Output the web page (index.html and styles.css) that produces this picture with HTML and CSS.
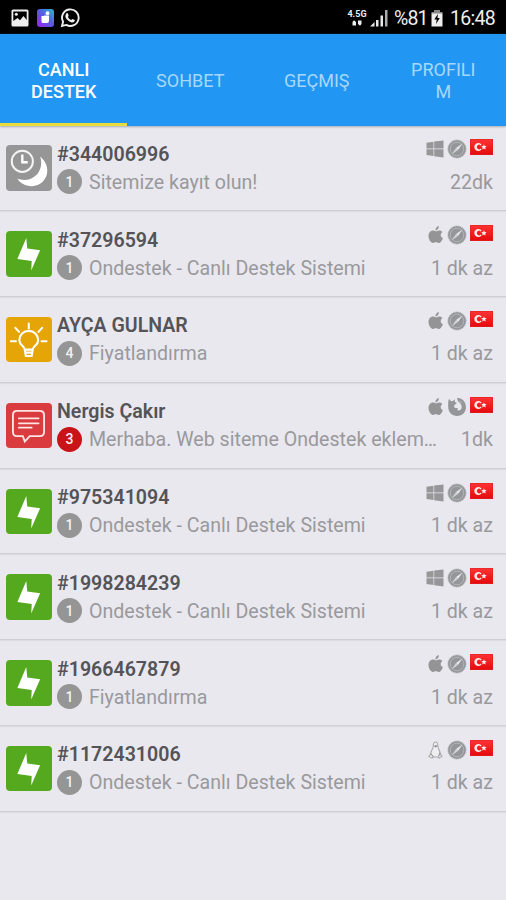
FILE: index.html
```html
<!DOCTYPE html>
<html lang="tr">
<head>
<meta charset="utf-8">
<title>Canlı Destek</title>
<link rel="stylesheet" href="styles.css">
</head>
<body>
<svg class="defs" aria-hidden="true">
  <defs>
    <linearGradient id="app" x1="0" y1="1" x2="1" y2="0"><stop offset="0" stop-color="#9d20f2"/><stop offset=".55" stop-color="#5360e0"/><stop offset="1" stop-color="#28b8d4"/></linearGradient>
    <linearGradient id="red" x1="0" y1="0" x2="0" y2="1"><stop offset="0" stop-color="#ff3434"/><stop offset="1" stop-color="#e3090d"/></linearGradient>
  </defs>
  <symbol id="bolt" viewBox="0 0 46 46"><path fill="#fff" d="M20.5 7 11.5 28.2 26 30.3 25.5 40 34.5 19.5 21.5 17.7Z"/></symbol>
  <symbol id="away" viewBox="0 0 46 46"><path fill="#fff" d="M34.500 11.500C45 20 44 35 32 40.500C24 43.500 15 40 11.500 34.200C18 36.500 26 35.500 31.500 29.500C36 24 36.500 17.500 34.500 11.500Z"/><circle cx="16.500" cy="16.500" r="10.700" fill="none" stroke="#f5f5f5" stroke-width="2"/><path d="M16.500 9.500V17.500H22" fill="none" stroke="#fff" stroke-width="2.400"/></symbol>
  <symbol id="idea" viewBox="0 0 46 46"><path d="M19 33C19 29 13.500 29 13.500 23.500a9.500 9.500 0 0 1 19 0C32.500 29 27 29 27 33ZM19 33l1 6.500h6l1-6.500M20 36h6M23 6.500v5M9.500 11l3.700 4M36.500 11l-3.700 4M5 24.500h5M36 24.500h5" fill="none" stroke="#fff" stroke-width="2.100" stroke-linecap="round"/></symbol>
  <symbol id="chat" viewBox="0 0 46 46"><path d="M11 8H34Q38.500 8 38.500 12.500V29Q38.500 33.500 34 33.500H24L19 39 17 33.500H11Q7 33.500 7 29V12.500Q7 8 11 8Z" fill="none" stroke="#ffe4e4" stroke-width="1.900"/><path d="M13 15.500H33M13 20.500H33M13 25H26" stroke="#ffe4e4" stroke-width="1.800" stroke-linecap="round"/></symbol>
  <symbol id="windows" viewBox="0 0 18 18"><path fill="#979799" d="M.5 2.700 7.500 1.700V8.500H.5ZM8.200 1.600 17.500 .4V8.500H8.200ZM.5 9.200H7.500V16L.5 15ZM8.200 9.200H17.500V17.500L8.200 16.200Z"/></symbol>
  <symbol id="apple" viewBox="0 0 18 18"><path fill="#949496" d="M12.800 .1C13 2.500 11.400 4.500 9.500 4.400 9.300 2.300 11 .4 12.800 .1ZM16.900 12.200C16 14.600 14.500 17 12.600 17 11.400 17 11.200 16.300 9.900 16.300 8.500 16.300 8.100 17 7 17 4.700 17 2.500 13 2.500 10 2.500 6.600 4.800 4.500 7 4.500 8.300 4.500 9.100 5.300 10 5.300 10.900 5.300 11.800 4.400 13.300 4.500 14.600 4.500 15.800 5.100 16.500 6.100 13.900 8 14.200 11 16.900 12.200Z"/></symbol>
  <symbol id="linux" viewBox="0 0 18 18"><path d="M7.200 6C7.200 3 7.600 1 9.500 1S12 3 12 6C12.300 8 14.300 9.800 14.300 13L16 15.200 13.200 17 11.500 16H7.500L6 17.200 2.800 15.400 4.800 13C4.500 10 6.800 8.500 7.200 6Z" fill="#eeeef0" stroke="#aaaaad" stroke-width="1.100"/><path d="M8 5.200 9.600 6.600 11.500 5.200 10.500 4.200 9 4.200ZM12 7.500C13.500 10 13.500 11.500 12.800 14L14 12.500" fill="#8b8b8d"/><path d="m4.500 12.500 3 3.300M14.500 12.500 12 15.500" stroke="#929294" stroke-width="1.100"/></symbol>
  <symbol id="safari" viewBox="0 0 20 20"><circle cx="10" cy="10" r="9" fill="#949699"/><circle cx="10" cy="10" r="9.100" fill="none" stroke="#a9abad" stroke-width="1" stroke-dasharray="1 1"/><circle cx="10" cy="10" r="6.800" fill="none" stroke="#b7b9bb" stroke-width=".9"/><path fill="#e8e8eb" d="M15.500 4.600 11 11 9 9Z"/><path fill="#d2d3d5" d="M4.500 15.400 9 9 11 11Z"/></symbol>
  <symbol id="firefox" viewBox="0 0 20 20"><path fill="#949699" d="M2 2 4.200 4.300 6 3.900 7.600 2.200 8 5 9.900 5.900 7.500 8 7 10C8 11.500 9.500 10.800 11 11.300 9.500 13 11 14 12.800 13.200 16 11.500 15 6.500 11 4.500L10 1.100C16 .5 19.300 6 19 11 18.500 16 14.500 19 10 19 5 19 1.200 15 1.200 10 1.200 6.500 1 4 2 2Z"/><path fill="#aeb0b2" d="M11 4.500C12 3 15 4 16 7L14 5.500Z"/></symbol>
  <symbol id="flag" viewBox="0 0 23 16"><path fill="url(#red)" d="M0 0H23V16H0Z"/><path d="M.5.500H22.500V15.500H.500Z" fill="none" stroke="#dd2426" stroke-opacity=".65"/><path fill="#ffecec" d="M11.600 5.700A4 4 0 1 0 11.600 10.300L10.800 9.600A2.300 2.300 0 1 1 10.800 6.400ZM13.900 5.300 14.700 7 16.700 7.300 15.200 8.600 15.700 10.600 13.900 9.500 12.200 10.600 12.600 8.600 11.200 7.300 13.200 7Z"/></symbol>
</svg>

<header class="status">
  <svg class="picture" viewBox="0 0 18 18"><path fill="#eee" fill-rule="evenodd" d="M2 .5H16Q17.500.5 17.500 2V16Q17.500 17.500 16 17.500H2Q.5 17.500.5 16V2Q.5.5 2 .5ZM2.300 2.500V12L6.500 9 9 11.200 12.500 7 15.700 11V2.500Z"/><circle cx="5.300" cy="5.300" r="1.500" fill="#eee"/></svg>
  <svg class="app" viewBox="0 0 18 18"><rect width="17" height="18" rx="3" fill="url(#app)"/><path fill="#fff" d="M4.500 7H9V14H6Q4.500 14 4.500 12.500ZM7 6.500H12V12Q12 14 10 14H7Z"/><circle cx="10.500" cy="4.200" r="1.900" fill="#fff"/></svg>
  <svg class="whatsapp" viewBox="0 0 20 20"><path d="M2 18 3.100 13.700A8.300 8.300 0 1 1 6.300 16.900Z" fill="none" stroke="#eee" stroke-width="1.900"/><path d="M6 5.800C6.800 4.800 7.600 4.800 8 5.800L8.700 7.700 7.900 9C8.700 10.500 9.800 11.500 11.200 12.100L12.400 10.900 14.800 12C15 13.800 13.200 14.800 11.800 14.400 8.500 13.700 5.800 10.800 5.300 8.200Z" fill="#eee"/></svg>
  <span class="network"><span>4.5G</span><svg viewBox="0 0 12 6"><path fill="#eee" d="M1.500 2 3 .3 5 2V5.500H1.500ZM7 .5H10.500V4L9 5.700 7 4Z"/></svg></span>
  <svg class="signal" viewBox="0 0 18 18"><path fill="#e8e8e8" d="M0 17.500 4.500 13V17.500ZM6 11H8.500V17.500H6ZM10.500 6.500H13V17.500H10.500Z"/><path fill="#aaa" d="M15 1H17.500V17.500H15Z"/></svg>
  <span class="percent">%81</span>
  <svg class="battery" viewBox="0 0 12 18"><path fill="#888" d="M3 1H9V3H11.500V5H.5V3H3Z"/><path fill="#eee" d="M.5 4.500H11.500V17.500H.5Z"/><path d="M6.900 5 3.300 10.500H5.700L5 15 8.800 9H6.500Z"/></svg>
  <span class="time">16:48</span>
</header>

<nav class="tabs">
  <a class="tab active">CANLI<br>DESTEK</a>
  <a class="tab">SOHBET</a>
  <a class="tab">GEÇMIŞ</a>
  <a class="tab">PROFILI<br>M</a>
</nav>

<main class="list">
  <article class="row">
    <svg class="avatar gray"><use href="#away"/></svg>
    <div class="body">
      <div class="line top"><b class="name">#344006996</b><span class="meta"><svg class="os"><use href="#windows"/></svg><svg class="browser"><use href="#safari"/></svg><svg class="flag"><use href="#flag"/></svg></span></div>
      <div class="line"><span class="count">1</span><span class="message">Sitemize kayıt olun!</span><span class="ago">22dk</span></div>
    </div>
  </article>
  <article class="row">
    <svg class="avatar green"><use href="#bolt"/></svg>
    <div class="body">
      <div class="line top"><b class="name">#37296594</b><span class="meta"><svg class="os"><use href="#apple"/></svg><svg class="browser"><use href="#safari"/></svg><svg class="flag"><use href="#flag"/></svg></span></div>
      <div class="line"><span class="count">1</span><span class="message">Ondestek - Canlı Destek Sistemi</span><span class="ago">1 dk az</span></div>
    </div>
  </article>
  <article class="row">
    <svg class="avatar amber"><use href="#idea"/></svg>
    <div class="body">
      <div class="line top"><b class="name">AYÇA GULNAR</b><span class="meta"><svg class="os"><use href="#apple"/></svg><svg class="browser"><use href="#safari"/></svg><svg class="flag"><use href="#flag"/></svg></span></div>
      <div class="line"><span class="count">4</span><span class="message">Fiyatlandırma</span><span class="ago">1 dk az</span></div>
    </div>
  </article>
  <article class="row">
    <svg class="avatar red"><use href="#chat"/></svg>
    <div class="body">
      <div class="line top"><b class="name">Nergis Çakır</b><span class="meta"><svg class="os"><use href="#apple"/></svg><svg class="browser"><use href="#firefox"/></svg><svg class="flag"><use href="#flag"/></svg></span></div>
      <div class="line"><span class="count unread">3</span><span class="message">Merhaba. Web siteme Ondestek eklem…</span><span class="ago">1dk</span></div>
    </div>
  </article>
  <article class="row">
    <svg class="avatar green"><use href="#bolt"/></svg>
    <div class="body">
      <div class="line top"><b class="name">#975341094</b><span class="meta"><svg class="os"><use href="#windows"/></svg><svg class="browser"><use href="#safari"/></svg><svg class="flag"><use href="#flag"/></svg></span></div>
      <div class="line"><span class="count">1</span><span class="message">Ondestek - Canlı Destek Sistemi</span><span class="ago">1 dk az</span></div>
    </div>
  </article>
  <article class="row">
    <svg class="avatar green"><use href="#bolt"/></svg>
    <div class="body">
      <div class="line top"><b class="name">#1998284239</b><span class="meta"><svg class="os"><use href="#windows"/></svg><svg class="browser"><use href="#safari"/></svg><svg class="flag"><use href="#flag"/></svg></span></div>
      <div class="line"><span class="count">1</span><span class="message">Ondestek - Canlı Destek Sistemi</span><span class="ago">1 dk az</span></div>
    </div>
  </article>
  <article class="row">
    <svg class="avatar green"><use href="#bolt"/></svg>
    <div class="body">
      <div class="line top"><b class="name">#1966467879</b><span class="meta"><svg class="os"><use href="#apple"/></svg><svg class="browser"><use href="#safari"/></svg><svg class="flag"><use href="#flag"/></svg></span></div>
      <div class="line"><span class="count">1</span><span class="message">Fiyatlandırma</span><span class="ago">1 dk az</span></div>
    </div>
  </article>
  <article class="row">
    <svg class="avatar green"><use href="#bolt"/></svg>
    <div class="body">
      <div class="line top"><b class="name">#1172431006</b><span class="meta"><svg class="os"><use href="#linux"/></svg><svg class="browser"><use href="#safari"/></svg><svg class="flag"><use href="#flag"/></svg></span></div>
      <div class="line"><span class="count">1</span><span class="message">Ondestek - Canlı Destek Sistemi</span><span class="ago">1 dk az</span></div>
    </div>
  </article>
</main>
</body>
</html>
```
FILE: styles.css
```css
* { box-sizing: border-box; }
body { margin: 0; height: 900px; overflow: hidden; background: #e9e8ee; font-family: Roboto, sans-serif; }
svg { display: block; flex: none; }
.defs { position: absolute; width: 0; height: 0; }

.status { display: flex; align-items: center; height: 34px; padding: 2px 11px 0; background: #000; color: #eee; font-size: 19.5px; }
.picture { width: 18px; height: 18px; }
.app { width: 18px; height: 18px; margin-left: 8px; }
.whatsapp { width: 20px; height: 20px; margin-left: 5px; }
.network { display: flex; flex-direction: column; align-items: center; width: 20px; margin-left: auto; font-size: 9px; font-weight: 700; line-height: 9px; }
.network svg { width: 12px; height: 6px; margin-top: 1px; }
.signal { width: 18px; height: 18px; margin: 0 6px 0 3px; }
.percent { width: 32px; letter-spacing: -.9px; }
.battery { width: 12px; height: 18px; margin: 0 7px 0 5px; }
.time { width: 45px; letter-spacing: -.7px; }

.tabs { display: grid; grid-template-columns: repeat(4, 1fr); height: 92px; background: #2196f3; box-shadow: 0 1px 2px #aaaab2; }
.tab { display: flex; align-items: center; justify-content: center; padding: 4px 0 0 1px; text-align: center; font-size: 18px; line-height: 21.5px; color: #a9d6fb; border-bottom: 3px solid transparent; }
.tab.active { color: #fff; font-weight: 500; border-color: #e9dc3a; }

.row { display: flex; height: 85.8px; padding: 20px 13px 0 6px; border-bottom: 1.5px solid #cfced3; box-shadow: 0 1px 1px #dddce2; }
.row:first-child { height: 85.2px; padding-top: 19.400px; }
.avatar { width: 45.5px; height: 45.5px; border-radius: 4px; }
.gray { background: #969696; }
.green { background: #55a91f; }
.amber { background: #e5a506; }
.red { background: #d93b3f; }
.body { flex: 1; min-width: 0; margin: -5px 0 0 5.5px; }
.line { display: flex; align-items: center; height: 28px; }
.name { font-size: 19.600px; font-weight: 600; color: #545458; white-space: nowrap; }
.meta { display: flex; align-items: flex-start; gap: 3px; margin: -10px 0 0 auto; height: 20px; }
.os { width: 18px; height: 18px; margin-top: 1px; }
.browser { width: 20px; height: 20px; }
.flag { width: 23px; height: 16px; }
.count { display: flex; flex: none; align-items: center; justify-content: center; width: 25px; height: 25px; margin: -1px 7px 0 0; border-radius: 50%; background: #959595; color: #f2f2f2; font-size: 14px; font-weight: 500; }
.unread { background: #c81419; }
.message, .ago { font-size: 19.600px; color: #99999d; white-space: nowrap; }
.ago { margin-left: auto; }
```
